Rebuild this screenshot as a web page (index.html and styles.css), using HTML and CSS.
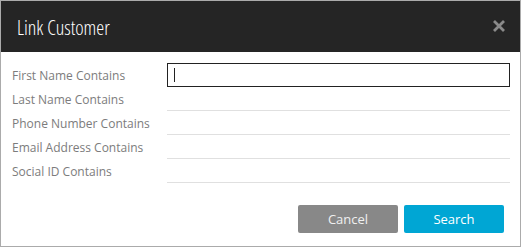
FILE: index.html
```html
<!DOCTYPE html>
<html>
<head>
<meta charset="utf-8">
<link rel="stylesheet" href="styles.css">
</head>
<body>
<div class="dialog">
  <div class="header">
    <h1 class="title">Link Customer</h1>
    <svg class="close" width="14" height="14" viewBox="0 0 14 14"><path d="M2 2 L12 12 M12 2 L2 12" stroke="#8a8a8a" stroke-width="2.8" stroke-linecap="butt"/></svg>
  </div>
  <div class="form">
    <label class="label">First Name Contains</label>
    <div class="field active"><span class="caret"></span></div>
    <label class="label">Last Name Contains</label>
    <div class="field"></div>
    <label class="label">Phone Number Contains</label>
    <div class="field"></div>
    <label class="label">Email Address Contains</label>
    <div class="field"></div>
    <label class="label">Social ID Contains</label>
    <div class="field"></div>
  </div>
  <div class="actions">
    <button class="btn cancel">Cancel</button>
    <button class="btn search">Search</button>
  </div>
</div>
</body>
</html>
```
FILE: styles.css
```css
html, body {
  margin: 0;
  padding: 0;
  background: #fff;
}
.dialog {
  width: 521px;
  height: 247px;
  box-sizing: border-box;
  border: 1px solid #ababab;
  background: #fff;
  font-family: "Open Sans", "Noto Sans", sans-serif;
}
.header {
  height: 51px;
  background: #252525;
  display: flex;
  align-items: center;
  justify-content: space-between;
  padding: 0 14px 0 16px;
}
.title {
  margin: 0;
  font-family: "Open Sans", sans-serif;
  font-stretch: 75%;
  font-weight: 300;
  font-size: 20px;
  color: #fff;
  letter-spacing: 0;
  margin-top: 2px;
}
.close {
  display: block;
  margin-top: -2px;
}
.form {
  display: grid;
  grid-template-columns: 155px 343px;
  grid-auto-rows: 24px;
  padding: 11px 0 0 11px;
}
.label {
  font-size: 12px;
  color: #7c7c7c;
  display: flex;
  align-items: center;
}
.field {
  box-sizing: border-box;
  border-bottom: 1px solid #e0e0e0;
}
.field.active {
  border: 1px solid #222;
  display: flex;
  align-items: center;
  padding-left: 6px;
}
.caret {
  width: 1px;
  height: 14px;
  background: #222;
}
.actions {
  display: flex;
  justify-content: flex-end;
  gap: 6px;
  padding: 22px 16px 0 0;
}
.btn {
  width: 100px;
  height: 28px;
  border: none;
  border-radius: 2px;
  font-family: "Open Sans", sans-serif;
  font-size: 13px;
  color: #fff;
  padding: 0;
}
.cancel {
  background: #888;
  color: #f0f0f0;
}
.search {
  background: #00a6d4;
}
```
